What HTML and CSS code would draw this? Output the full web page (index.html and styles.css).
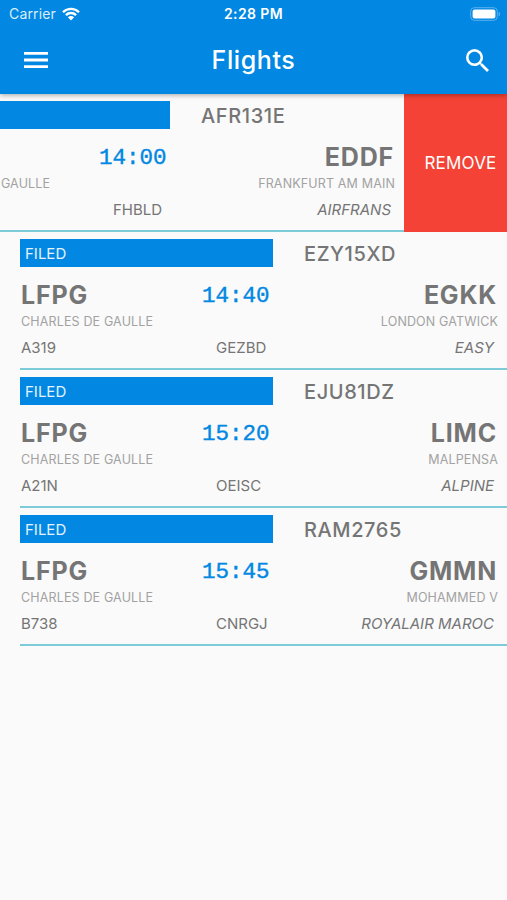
FILE: index.html
```html
<!DOCTYPE html>
<html lang="en">
<head>
  <meta charset="UTF-8">
  <title>Flights</title>
  <link rel="stylesheet" href="styles.css">
</head>
<body>

  <header class="app-bar">
    <div class="status-bar">
      <div class="carrier">
        <span>Carrier</span>
        <svg class="wifi" viewBox="0 0 18 14" width="18" height="14">
          <path d="M1 5.2a11.4 11.4 0 0 1 16 0M3.9 8.1a7.3 7.3 0 0 1 10.2 0" fill="none" stroke="#fff" stroke-width="2.3"/>
          <path d="M9 13.4L5.9 10.3a4.4 4.4 0 0 1 6.2 0z" fill="#fff"/>
        </svg>
      </div>
      <div class="clock">2:28 PM</div>
      <svg class="battery" viewBox="0 0 31 14" width="31" height="14">
        <rect x=".7" y=".7" width="26.6" height="12.6" rx="3.6" fill="none" stroke="#5cb1ee" stroke-width="1"/>
        <rect x="2.6" y="2.5" width="22.8" height="9" rx="2" fill="#fff"/>
        <path d="M28.7 4.7c1.8.6 1.8 4 0 4.6z" fill="#5cb1ee"/>
      </svg>
    </div>
    <div class="toolbar">
      <svg class="menu" viewBox="0 0 24 16" width="24" height="16">
        <path d="M0 0h24v2.8H0zM0 6.6h24v2.8H0zM0 13.2h24V16H0z" fill="#fff"/>
      </svg>
      <h1>Flights</h1>
      <svg class="search" viewBox="3 3 17.5 17.5" width="23" height="23">
        <path d="M15.5 14h-.79l-.28-.27A6.47 6.47 0 0 0 16 9.5 6.5 6.5 0 1 0 9.5 16c1.61 0 3.09-.59 4.23-1.57l.27.28v.79l5 4.99L20.49 19l-4.99-5zm-6 0C7.01 14 5 11.99 5 9.5S7.01 5 9.5 5 14 7.01 14 9.5 11.99 14 9.5 14z" fill="#fff"/>
      </svg>
    </div>
  </header>

  <main class="flights">
    <div class="flight swiped">
      <div class="flight-body">
        <div class="line top"><span class="status"></span><span class="callsign">AFR131E</span></div>
        <div class="line route"><b></b><span class="time">14:00</span><b class="end">EDDF</b></div>
        <div class="line names"><span>CHARLES DE GAULLE</span><span class="end">FRANKFURT AM MAIN</span></div>
        <div class="line details"><span></span><span class="reg">FHBLD</span><i class="end">AIRFRANS</i></div>
      </div>
      <button class="remove">REMOVE</button>
    </div>

    <div class="flight">
      <div class="flight-body">
        <div class="line top"><span class="status">FILED</span><span class="callsign">EZY15XD</span></div>
        <div class="line route"><b>LFPG</b><span class="time">14:40</span><b class="end">EGKK</b></div>
        <div class="line names"><span>CHARLES DE GAULLE</span><span class="end">LONDON GATWICK</span></div>
        <div class="line details"><span>A319</span><span class="reg">GEZBD</span><i class="end">EASY</i></div>
      </div>
    </div>

    <div class="flight">
      <div class="flight-body">
        <div class="line top"><span class="status">FILED</span><span class="callsign">EJU81DZ</span></div>
        <div class="line route"><b>LFPG</b><span class="time">15:20</span><b class="end">LIMC</b></div>
        <div class="line names"><span>CHARLES DE GAULLE</span><span class="end">MALPENSA</span></div>
        <div class="line details"><span>A21N</span><span class="reg">OEISC</span><i class="end">ALPINE</i></div>
      </div>
    </div>

    <div class="flight">
      <div class="flight-body">
        <div class="line top"><span class="status">FILED</span><span class="callsign">RAM2765</span></div>
        <div class="line route"><b>LFPG</b><span class="time">15:45</span><b class="end">GMMN</b></div>
        <div class="line names"><span>CHARLES DE GAULLE</span><span class="end">MOHAMMED V</span></div>
        <div class="line details"><span>B738</span><span class="reg">CNRGJ</span><i class="end">ROYALAIR MAROC</i></div>
      </div>
    </div>
  </main>

</body>
</html>
```
FILE: styles.css
```css
* {
  box-sizing: border-box;
}
body {
  font-family: Inter, sans-serif;
  background: #fafafa;
  color: #757575;
  margin: 0;
  height: 900px;
  overflow: hidden;
}
.app-bar {
  position: relative;
  height: 94px;
  background: #0288e2;
  color: #fff;
  box-shadow: 0 1px 5px rgba(0, 0, 0, 0.35);
}
.status-bar {
  display: grid;
  grid-template-columns: 1fr auto 1fr;
  align-items: center;
  height: 27px;
  padding: 0 6px 0 9px;
}
.carrier {
  display: flex;
  align-items: center;
  gap: 6px;
  font-size: 14px;
  letter-spacing: 0.15px;
  color: #d9eefc;
}
.clock {
  margin-left: -3px;
  font-size: 14px;
  font-weight: 600;
  letter-spacing: 0.4px;
}
.battery {
  justify-self: end;
}
.toolbar {
  display: grid;
  grid-template-columns: 1fr auto 1fr;
  align-items: center;
  height: 66px;
  padding: 0 18px 0 24px;
}
.toolbar h1 {
  margin: 0 6px 0 0;
  font-size: 25px;
  font-weight: 500;
  letter-spacing: 0.6px;
}
.search {
  justify-self: end;
}
.flight {
  display: flex;
  height: 138px;
  overflow: hidden;
}
.flight-body {
  flex: none;
  width: 487px;
  height: 138px;
  margin-left: 20px;
  padding-top: 7px;
  border-bottom: 2px solid #7ccbd8;
}
.swiped .flight-body {
  margin-left: -83px;
}
.line {
  display: grid;
  grid-template-columns: 182px 71px 1fr;
  align-items: center;
  white-space: nowrap;
}
.end {
  grid-column: 3;
  text-align: right;
}
.top {
  grid-template-columns: 253px 1fr;
  height: 28px;
}
.status {
  height: 28px;
  padding-left: 5px;
  line-height: 29px;
  background: #0288e2;
  color: #e4f3fd;
  font-size: 15px;
}
.callsign {
  padding: 2px 0 0 31px;
  font-size: 20px;
  font-weight: 500;
  letter-spacing: 0.6px;
}
.route {
  height: 30px;
  margin-top: 13px;
  padding-right: 10px;
}
.route b {
  padding-left: 1px;
  font-size: 25px;
  font-weight: 700;
  letter-spacing: 0.8px;
}
.time {
  padding-top: 2px;
  color: #0288e2;
  font-family: "Liberation Mono", monospace;
  font-size: 22.5px;
  -webkit-text-stroke: 0.4px #0288e2;
}
.names {
  height: 20px;
  margin-top: 1px;
  padding-right: 9px;
  color: #a2a2a2;
  font-size: 12.5px;
  letter-spacing: 0.15px;
}
.names span:first-child,
.details span:first-child {
  padding-left: 1px;
}
.details {
  height: 20px;
  margin-top: 6px;
  padding-right: 13px;
  font-size: 15px;
}
.details .reg {
  padding-left: 14px;
}
.remove {
  flex: none;
  width: 104px;
  border: 0;
  padding: 0 0 0 9px;
  background: #f44336;
  color: #fff;
  font: 17px Inter, sans-serif;
  letter-spacing: 0.2px;
}
```
